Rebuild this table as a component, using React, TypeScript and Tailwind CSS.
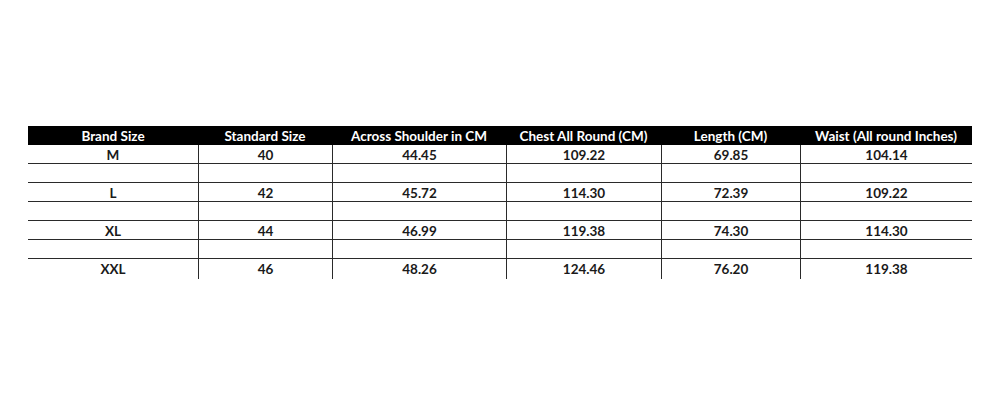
const headers = [
  'Brand Size',
  'Standard Size',
  'Across Shoulder in CM',
  'Chest All Round (CM)',
  'Length (CM)',
  'Waist (All round Inches)',
];

const rows = [
  ['M', '40', '44.45', '109.22', '69.85', '104.14'],
  ['L', '42', '45.72', '114.30', '72.39', '109.22'],
  ['XL', '44', '46.99', '119.38', '74.30', '114.30'],
  ['XXL', '46', '48.26', '124.46', '76.20', '119.38'],
];

const cols = 'grid grid-cols-[170px_134px_174px_155px_139px_172px]';

function Row({ cells, last }: { cells: string[]; last?: boolean }) {
  return (
    <div className={`${cols} h-[19px] ${last ? '' : 'border-b border-[#2a2a2a]'}`}>
      {cells.map((c, i) => (
        <div
          key={i}
          className={`flex items-center justify-center text-[#1a1a1a] ${i > 0 ? 'border-l border-[#2a2a2a]' : ''}`}
        >
          {c}
        </div>
      ))}
    </div>
  );
}

export default function App() {
  return (
    <div className="w-[1000px] h-[400px] bg-white pt-[126px] pl-[28px] font-['Lato',sans-serif] font-bold text-[13.5px]">
      <div className="w-[944px]">
        <div className={`${cols} h-[19px] bg-black text-white`}>
          {headers.map((h) => (
            <div key={h} className="flex items-center justify-center">
              {h}
            </div>
          ))}
        </div>
        {rows.map((r, i) => (
          <div key={i}>
            <Row cells={r} last={i === rows.length - 1} />
            {i < rows.length - 1 && <Row cells={['', '', '', '', '', '']} />}
          </div>
        ))}
      </div>
    </div>
  );
}
